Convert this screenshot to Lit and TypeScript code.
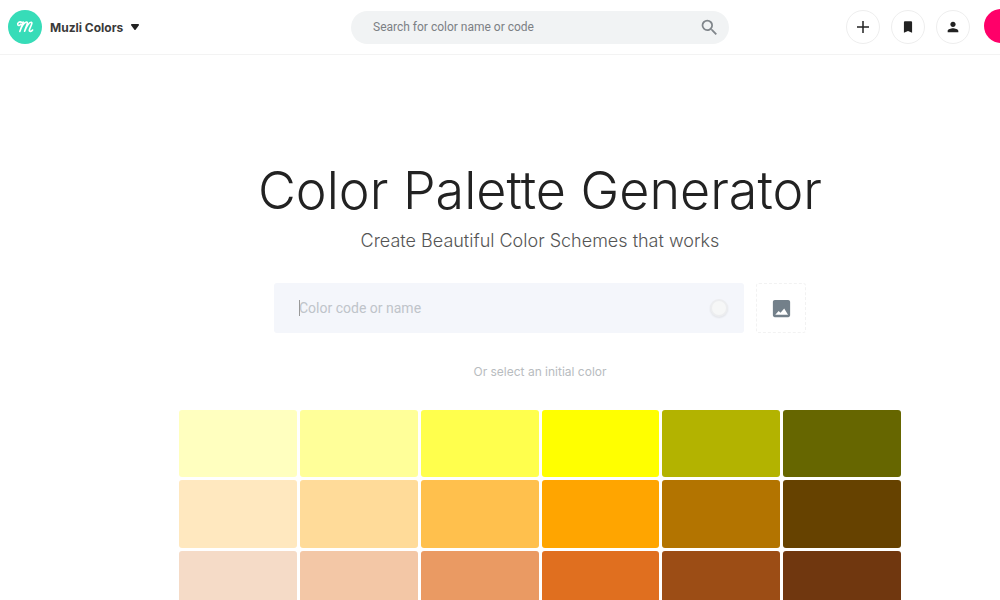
import { LitElement, html, css } from "lit";
import { customElement } from "lit/decorators.js";
import { styleMap } from "lit/directives/style-map.js";

const SWATCHES = [
  "#ffffbf", "#ffff99", "#ffff4d", "#ffff00", "#b3b300", "#666600",
  "#ffe8bf", "#ffdb99", "#ffc04d", "#ffa500", "#b37400", "#664200",
  "#f5dbc7", "#f3c7a6", "#ea9a63", "#e06f1f", "#9c4d15", "#70370f",
  "#fac7bf", "#f7a799", "#ee6b55", "#e03616", "#9c260f", "#701b0b",
];

@customElement("app-root")
export class AppRoot extends LitElement {
  static styles = css`
    :host {
      display: block;
      height: 100vh;
      overflow: hidden;
      background: #fff;
      color: #222;
      font-family: Inter, "Open Sans", sans-serif;
    }
    * { box-sizing: border-box; }
    button, input { font: inherit; margin: 0; border: 0; padding: 0; }
    button { cursor: pointer; }
    input { outline: none; }
    svg { display: block; }
    .page { min-width: 1080px; }
    .header {
      display: grid;
      grid-template-columns: 1fr 378px 1fr;
      align-items: center;
      height: 55px;
      padding: 0 8px;
      border-bottom: 1px solid #f3f3f3;
    }
    .brand {
      display: flex;
      align-items: center;
      gap: 8px;
      justify-self: start;
      background: none;
      color: #3a3a3a;
      font-size: 12px;
      font-weight: 700;
    }
    .search {
      display: flex;
      align-items: center;
      height: 33px;
      padding: 0 9px 0 22px;
      border-radius: 17px;
      background: #f1f3f4;
      color: #80868b;
    }
    .search input {
      flex: 1;
      min-width: 0;
      background: none;
      font-family: Roboto, "Noto Sans", sans-serif;
      font-size: 12px;
    }
    .search input::placeholder { color: #7c8084; opacity: 1; }
    .search button { background: none; color: inherit; }
    .actions {
      display: flex;
      align-items: center;
      justify-content: flex-end;
      gap: 11px;
      padding-right: 54px;
    }
    .round {
      display: grid;
      place-items: center;
      width: 34px;
      height: 34px;
      border: 1px solid #eee;
      border-radius: 50%;
      background: #fff;
      color: #222;
    }
    .accent { border: 0; margin: 0 0 3px 3px; background: #ff0069; }
    .main {
      display: flex;
      flex-direction: column;
      align-items: center;
      padding-top: 104px;
    }
    h1 {
      margin: 0;
      font-size: 52px;
      font-weight: 300;
      line-height: 64px;
    }
    .subtitle {
      margin: 6px 0 0;
      color: #555;
      font-size: 18px;
      font-weight: 300;
      line-height: 24px;
    }
    .picker { display: flex; gap: 12px; margin-top: 30px; }
    .field {
      position: relative;
      display: flex;
      align-items: center;
      width: 470px;
      height: 50px;
      padding: 0 16px 0 25px;
      border-radius: 3px;
      background: #f4f6fb;
    }
    .field input {
      flex: 1;
      min-width: 0;
      background: none;
      font-family: Roboto, "Noto Sans", sans-serif;
      font-size: 14px;
    }
    .field input::placeholder { color: #bfc4ca; opacity: 1; }
    .caret {
      position: absolute;
      left: 25px;
      top: 17px;
      width: 1px;
      height: 16px;
      background: #999;
    }
    .preview {
      width: 18px;
      height: 18px;
      border: 2px solid #ecedef;
      border-radius: 50%;
      background: #f6f7f7;
      box-shadow: 0 1px 2px #00000014;
    }
    .upload {
      display: grid;
      place-items: center;
      width: 50px;
      height: 50px;
      border: 1px dashed #f2f2f2;
      border-radius: 3px;
      background: #fff;
      color: #73808a;
    }
    .hint {
      margin: 30px 0 0;
      color: #b8bcc0;
      font-size: 12px;
      line-height: 18px;
    }
    .swatches {
      display: grid;
      grid-template-columns: repeat(6, 1fr);
      gap: 3px;
      width: 722px;
      margin-top: 29px;
    }
    .swatch { aspect-ratio: 7 / 4; border-radius: 3px; }
  `;

  render() {
    return html`
      <div class="page">
        <header class="header">
          <button class="brand">
            <svg width="34" height="34" viewBox="0 0 34 34" fill="none">
              <circle cx="17" cy="17" r="17" fill="#37dcb8" />
              <path d="M14 12.500C11.500 11 9 12.800 9.800 14.800C10.300 16 12.200 15.500 12.800 14.200M15.200 12L11.800 21.500C13.200 17 16.500 11.500 18.800 12C20.500 12.500 17.800 17 16.600 21.300C18 17 21.200 11.800 23.300 12.200C25.300 12.700 21.500 18 21.300 20.200C21.200 22 23.500 21.500 24.600 20" stroke="#fff" stroke-width="1.6" stroke-linecap="round" stroke-linejoin="round" />
            </svg>
            <span>Muzli Colors</span>
            <svg width="8" height="6" viewBox="0 0 8 6"><path d="M0.500 0H7.500Q8.200 0.500 7.700 1.400L4.600 5.700Q4 6.300 3.400 5.700L0.300 1.400Q-.2 .5 .5 0Z" fill="#222" /></svg>
          </button>
          <form class="search">
            <input type="text" aria-label="Search for color name or code" placeholder="Search for color name or code" />
            <button type="button" aria-label="Search">
              <svg width="21" height="21" viewBox="0 0 24 24" fill="currentColor"><path d="M15.500 14h-.79l-.28-.27A6.470 6.470 0 0 0 16 9.500 6.500 6.500 0 1 0 9.500 16c1.610 0 3.090-.59 4.230-1.570l.27.28v.79l5 4.990L20.490 19l-4.990-5zm-6 0C7.010 14 5 11.990 5 9.500S7.010 5 9.500 5 14 7.010 14 9.500 11.990 14 9.500 14z" /></svg>
            </button>
          </form>
          <nav class="actions">
            <button class="round" aria-label="Add">
              <svg width="18" height="18" viewBox="0 0 24 24" fill="currentColor"><path d="M20 13h-7v7h-2v-7H4v-2h7V4h2v7h7z" /></svg>
            </button>
            <button class="round" aria-label="Bookmarks">
              <svg width="14" height="14" viewBox="0 0 24 24" fill="currentColor"><path d="M17 2H7c-1.100 0-1.990.9-1.990 2L5 22l7-3 7 3V4c0-1.100-.9-2-2-2z" /></svg>
            </button>
            <button class="round" aria-label="Account">
              <svg width="16" height="16" viewBox="0 0 24 24" fill="currentColor"><path d="M12 12c2.210 0 4-1.790 4-4s-1.790-4-4-4-4 1.790-4 4 1.790 4 4 4zm0 2c-2.670 0-8 1.340-8 4v2h16v-2c0-2.660-5.330-4-8-4z" /></svg>
            </button>
            <button class="round accent" aria-label="Menu"></button>
          </nav>
        </header>
        <main class="main">
          <h1>Color Palette Generator</h1>
          <p class="subtitle">Create Beautiful Color Schemes that works</p>
          <form class="picker">
            <div class="field">
              <input type="text" aria-label="Color code or name" placeholder="Color code or name" />
              <span class="caret"></span>
              <button type="button" class="preview" aria-label="Pick a color"></button>
            </div>
            <button type="button" class="upload" aria-label="Upload an image">
              <svg width="23" height="23" viewBox="0 0 24 24" fill="currentColor"><path d="M21 19V5c0-1.100-.9-2-2-2H5c-1.100 0-2 .9-2 2v14c0 1.100.9 2 2 2h14c1.100 0 2-.9 2-2zM5.500 18.500L9 14.500l2 2 3.800-4.500 4 6.500z" /></svg>
            </button>
          </form>
          <p class="hint">Or select an initial color</p>
          <div class="swatches">
            ${SWATCHES.map((c) => html`<button class="swatch" aria-label=${c} style=${styleMap({ background: c })}></button>`)}
          </div>
        </main>
      </div>
    `;
  }
}
